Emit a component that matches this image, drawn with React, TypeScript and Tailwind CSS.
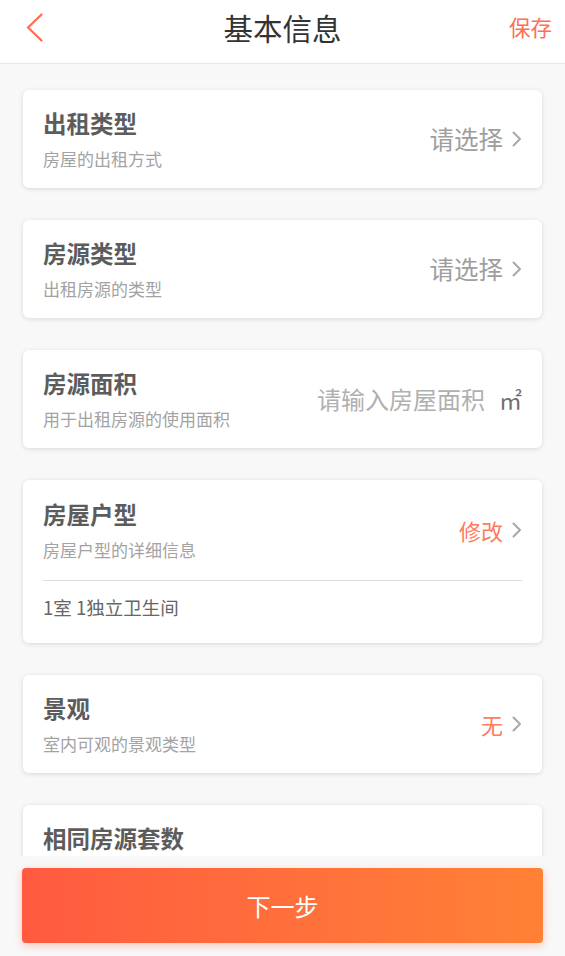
import React from "react";

const Chevron = () => (
  <svg width="10" height="16" viewBox="0 0 10 16" className="shrink-0">
    <path d="M1.5 1.5 L8 8 L1.5 14.5" fill="none" stroke="#a8a8a8" strokeWidth="2" strokeLinecap="round" strokeLinejoin="round" />
  </svg>
);

const Left = ({ title, sub }: { title: string; sub?: string }) => (
  <div className="flex flex-col">
    <div className="text-[23.5px] leading-[30px] font-semibold text-[#5c5c5c]">{title}</div>
    {sub && <div className="text-[17px] leading-[22px] mt-[10px] text-[#a3a3a3]">{sub}</div>}
  </div>
);

const SelectCard = ({ title, sub, value, accent }: { title: string; sub: string; value: string; accent?: boolean }) => (
  <div className="bg-white rounded-[6px] shadow-[0_1px_5px_rgba(0,0,0,0.13)] shrink-0">
    <div className="h-[98px] px-[20px] flex items-center justify-between">
      <Left title={title} sub={sub} />
      <div className="flex items-center gap-[9px]">
        <span className={accent ? "text-[22px] text-[#ff7a5e]" : "text-[24.5px] text-[#9e9e9e]"}>{value}</span>
        <Chevron />
      </div>
    </div>
  </div>
);

export default function App() {
  return (
    <div
      className="w-[565px] h-[956px] flex flex-col bg-[#f8f8f8] overflow-hidden"
      style={{ fontFamily: '"Noto Sans CJK SC", "Noto Sans", sans-serif' }}
    >
      <header className="h-[64px] shrink-0 bg-white border-b border-[#e8e8e8]">
        <div className="h-[55px] flex items-center">
          <div className="w-[110px] pl-[26px] flex items-center">
            <svg width="18" height="30" viewBox="0 0 18 30">
              <path d="M15.5 1.5 L2 14.5 L15.5 27.5" fill="none" stroke="#ff6a50" strokeWidth="2.2" strokeLinecap="round" strokeLinejoin="round" />
            </svg>
          </div>
          <div className="flex-1 text-center text-[29.5px] text-[#333333]">基本信息</div>
          <div className="w-[110px] pr-[13px] text-right text-[21.5px] text-[#ff6e55]">保存</div>
        </div>
      </header>

      <main className="flex-1 min-h-0 overflow-hidden px-[23px] pt-[26px] flex flex-col gap-[32px]">
        <SelectCard title="出租类型" sub="房屋的出租方式" value="请选择" />
        <SelectCard title="房源类型" sub="出租房源的类型" value="请选择" />

        <div className="bg-white rounded-[6px] shadow-[0_1px_5px_rgba(0,0,0,0.13)] shrink-0">
          <div className="h-[98px] px-[20px] flex items-center justify-between">
            <Left title="房源面积" sub="用于出租房源的使用面积" />
            <div className="flex items-center gap-[14px]">
              <span className="text-[24px] text-[#b0b0b0]">请输入房屋面积</span>
              <span className="text-[23px] text-[#6f6f6f]">㎡</span>
            </div>
          </div>
        </div>

        <div className="bg-white rounded-[6px] shadow-[0_1px_5px_rgba(0,0,0,0.13)] shrink-0">
          <div className="h-[100px] px-[20px] flex items-center justify-between">
            <Left title="房屋户型" sub="房屋户型的详细信息" />
            <div className="flex items-center gap-[9px]">
              <span className="text-[22px] text-[#ff7a5e]">修改</span>
              <Chevron />
            </div>
          </div>
          <div className="mx-[20px] h-px bg-[#dddddd]" />
          <div className="h-[62px] px-[20px] pt-[14px] text-[18.5px] leading-[24px] text-[#666666]">1室 1独立卫生间</div>
        </div>

        <SelectCard title="景观" sub="室内可观的景观类型" value="无" accent />

        <div className="bg-white rounded-[6px] shadow-[0_1px_5px_rgba(0,0,0,0.13)] shrink-0">
          <div className="h-[98px] px-[20px] pt-[18px]">
            <div className="text-[23.5px] leading-[30px] font-semibold text-[#5c5c5c]">相同房源套数</div>
          </div>
        </div>
      </main>

      <footer className="h-[100px] shrink-0 px-[22px] pt-[12px]">
        <button className="w-full h-[75px] rounded-[4px] bg-gradient-to-r from-[#ff5a40] to-[#ff8135] text-white text-[24px] shadow-[0_3px_8px_rgba(255,90,60,0.3)]">
          下一步
        </button>
      </footer>
    </div>
  );
}
